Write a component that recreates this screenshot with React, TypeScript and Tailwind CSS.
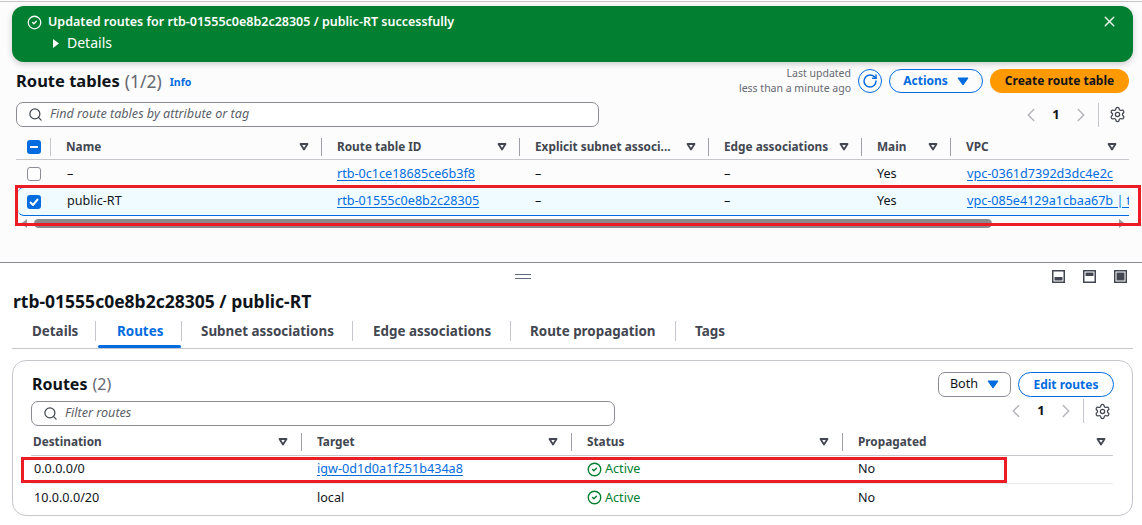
import { ChevronLeft, ChevronRight, CircleCheck, RotateCw, Search, Settings, X } from "lucide-react";

const Caret = ({ className = "" }: { className?: string }) => (
  <svg width="12" height="10" viewBox="0 0 12 10" className={className}>
    <path d="M2.5 2h7L6 7.5z" fill="none" stroke="#424650" strokeWidth="1.8" strokeLinejoin="round" />
  </svg>
);

const SolidCaret = ({ className = "" }: { className?: string }) => (
  <svg width="12" height="9" viewBox="0 0 12 9" className={className}>
    <path d="M1 1h10L6 8z" fill="#006ce0" stroke="#006ce0" strokeLinejoin="round" />
  </svg>
);

const Pager = ({ className = "" }: { className?: string }) => (
  <div className={`flex items-center ${className}`}>
    <ChevronLeft size={22} strokeWidth={1.6} className="text-[#b4b4bb]" />
    <span className="w-[28px] text-center text-[13px] font-bold text-[#0f141a]">1</span>
    <ChevronRight size={22} strokeWidth={1.6} className="text-[#b4b4bb]" />
    <span className="ml-[6px] h-[24px] w-px bg-[#c6c6cd]" />
    <Settings size={17} strokeWidth={1.8} className="ml-[10px] text-[#424650]" />
  </div>
);

const SearchBox = ({ text, className = "" }: { text: string; className?: string }) => (
  <div className={`flex h-[25px] items-center rounded-[7px] border border-[#8c8c94] bg-white pl-[11px] ${className}`}>
    <Search size={15} strokeWidth={2} className="text-[#424650]" />
    <span className="ml-[7px] text-[12.6px] italic text-[#5b6068]">{text}</span>
  </div>
);

const HeadCell = ({ label, sep = true, width }: { label: string; sep?: boolean; width: string }) => (
  <div className={`flex h-[18px] items-center justify-between pl-[15px] pr-[11px] text-[11.8px] font-bold text-[#424650] ${width} ${sep ? "border-r border-[#a0a0a8]" : ""}`}>
    <span className="truncate">{label}</span>
    <Caret />
  </div>
);

const Link = ({ children }: { children: React.ReactNode }) => (
  <span className="text-[12.6px] text-[#006ce0] underline underline-offset-2">{children}</span>
);

const topCols = ["w-[35px]", "w-[271px]", "w-[198px]", "w-[189px]", "w-[153px]", "w-[89px]", "w-[178px]"];

const TopRow = ({ checked, name, id, vpc }: { checked?: boolean; name: string; id: string; vpc: string }) => (
  <div className={`flex items-center text-[12.6px] text-[#0f141a] ${checked ? "ml-[2px] h-[29px] rounded-l-[6px] border-y border-[#006ce0] bg-[#f0fbff]" : "h-[27px] pt-[1px]"}`}>
    <div className={`${topCols[0]} flex ${checked ? "ml-[-2px] pl-[11px]" : "pl-[11px]"}`}>
      {checked ? (
        <span className="flex h-[14px] w-[14px] items-center justify-center rounded-[3px] bg-[#006ce0]">
          <svg width="10" height="8" viewBox="0 0 10 8"><path d="M1 4l3 3 5-6" fill="none" stroke="white" strokeWidth="2" /></svg>
        </span>
      ) : (
        <span className="h-[14px] w-[14px] rounded-[3px] border border-[#8c8c94] bg-white" />
      )}
    </div>
    <div className={`${topCols[1]} pl-[16px]`}>{name}</div>
    <div className={`${topCols[2]} pl-[15px]`}><Link>{id}</Link></div>
    <div className={`${topCols[3]} pl-[15px]`}>–</div>
    <div className={`${topCols[4]} pl-[15px]`}>–</div>
    <div className={`${topCols[5]} pl-[15px]`}>Yes</div>
    <div className={`${topCols[6]} overflow-hidden whitespace-nowrap pl-[16px]`}><Link>{vpc}</Link></div>
  </div>
);

const Active = () => (
  <span className="flex items-center gap-[3px] text-[12.6px] text-[#00802f]">
    <CircleCheck size={15} strokeWidth={2.2} />
    Active
  </span>
);

const RouteRow = ({ dest, target, border }: { dest: string; target: React.ReactNode; border?: boolean }) => (
  <div className={`flex h-[28px] items-center text-[12.6px] text-[#0f141a] ${border ? "border-b border-[#e8e8ec]" : ""}`}>
    <div className="w-[286px] pl-[3px]">{dest}</div>
    <div className="w-[270px]">{target}</div>
    <div className="w-[271px]"><Active /></div>
    <div>No</div>
  </div>
);

const tabs = [
  ["Details", "w-[84px] pl-[20px]"],
  ["Routes", "w-[86px] pl-[21px] text-[#006ce0]"],
  ["Subnet associations", "w-[171px] pl-[19px]"],
  ["Edge associations", "w-[158px] pl-[20px]"],
  ["Route propagation", "w-[165px] pl-[19px]"],
  ["Tags", "pl-[19px]"],
];

const WindowIcon = ({ y, h }: { y: number; h: number }) => (
  <svg width="13" height="13" viewBox="0 0 13 13">
    <rect x="0.75" y="0.75" width="11.5" height="11.5" fill="none" stroke="#424650" strokeWidth="1.5" />
    <rect x="2.5" y={y} width="8" height={h} fill="#424650" />
  </svg>
);

export default function App() {
  return (
    <div className="relative h-[525px] w-[1142px] overflow-hidden bg-white font-['Noto_Sans',sans-serif]">
      {/* Top panel */}
      <div className="h-[263px] border-b border-[#8c8c94] bg-[#fcfcfc] pt-[1px]">
        <div className="h-px bg-[#c6c6c6]" />

        {/* Flash */}
        <div className="ml-[12px] mt-[4px] flex h-[56px] w-[1121px] justify-between rounded-[12px] bg-[#037f31] pl-[15px] pr-[15px] pt-[7px] text-white shadow-[0_2px_6px_rgba(0,0,0,0.2)]">
          <div>
            <div className="flex items-center gap-[6px] text-[12.5px] font-semibold leading-[18px]">
              <CircleCheck size={15} strokeWidth={2} />
              <span>Updated routes for rtb-01555c0e8b2c28305 / public-RT successfully</span>
            </div>
            <div className="ml-[25px] mt-[3px] flex items-center gap-[7px] text-[14px] leading-[18px]">
              <svg width="8" height="9" viewBox="0 0 8 9"><path d="M1 0l6 4.5L1 9z" fill="white" /></svg>
              Details
            </div>
          </div>
          <X size={17} strokeWidth={2} className="text-[#e8f3ec]" />
        </div>

        {/* Header */}
        <div className="mt-[6px] flex h-[26px] items-center pl-[16px] pr-[13px]">
          <span className="text-[16.5px] font-bold text-[#0f141a]">Route tables</span>
          <span className="ml-[5px] text-[17.5px] text-[#656871]">(1/2)</span>
          <span className="ml-[8px] mt-[3px] text-[10.5px] font-bold text-[#006ce0]">Info</span>
          <div className="ml-auto text-right text-[10.5px] leading-[15px] text-[#656871]">
            <div>Last updated</div>
            <div>less than a minute ago</div>
          </div>
          <span className="ml-[7px] flex h-[24px] w-[24px] items-center justify-center rounded-full border-[1.5px] border-[#006ce0]">
            <RotateCw size={16} strokeWidth={2.2} className="text-[#006ce0]" />
          </span>
          <span className="ml-[7px] flex h-[24px] w-[94px] items-center justify-center gap-[9px] rounded-full border border-[#006ce0] text-[12px] font-bold text-[#006ce0]">
            Actions
            <SolidCaret />
          </span>
          <span className="ml-[7px] flex h-[24px] w-[139px] items-center justify-center rounded-full bg-[#ff9900] text-[12px] font-bold text-[#0f141a]">
            Create route table
          </span>
        </div>

        {/* Search + pager */}
        <div className="mt-[8px] flex items-center justify-between pl-[16px] pr-[16px]">
          <SearchBox text="Find route tables by attribute or tag" className="w-[583px]" />
          <Pager />
        </div>

        {/* Table */}
        <div className="ml-[16px] mt-[6px] w-[1113px]">
          <div className="flex h-[27px] items-center border-b border-[#c6c6cd] pt-[2px]">
            <div className={`${topCols[0]} flex h-[18px] items-center border-r border-[#c6c6cd] pl-[11px]`}>
              <span className="flex h-[14px] w-[14px] items-center justify-center rounded-[3px] bg-[#006ce0]">
                <span className="h-[2px] w-[8px] bg-white" />
              </span>
            </div>
            <HeadCell label="Name" width={topCols[1]} />
            <HeadCell label="Route table ID" width={topCols[2]} />
            <HeadCell label="Explicit subnet associ..." width={topCols[3]} />
            <HeadCell label="Edge associations" width={topCols[4]} />
            <HeadCell label="Main" width={topCols[5]} />
            <HeadCell label="VPC" width={topCols[6]} sep={false} />
          </div>
          <TopRow name="–" id="rtb-0c1ce18685ce6b3f8" vpc="vpc-0361d7392d3dc4e2c" />
          <TopRow checked name="public-RT" id="rtb-01555c0e8b2c28305" vpc="vpc-085e4129a1cbaa67b | three-tier-vpc" />
        </div>

        {/* Scrollbar */}
        <div className="ml-[20px] mt-[3px] flex h-[9px] w-[1106px] items-center">
          <svg width="8" height="9" viewBox="0 0 8 9"><path d="M7 0v9L1 4.5z" fill="#9a9a9a" /></svg>
          <span className="ml-[6px] h-[9px] w-[958px] rounded-full bg-[#8a8a8a]" />
          <svg width="8" height="9" viewBox="0 0 8 9" className="ml-auto"><path d="M1 0v9l6-4.5z" fill="#9a9a9a" /></svg>
        </div>
      </div>

      {/* Split panel */}
      <div className="relative flex h-[27px] items-start justify-center">
        <span className="mt-[11px] ml-[-96px] h-[5px] w-[16px] border-y border-[#5f6b7a]" />
        <div className="absolute right-[15px] top-[7px] flex gap-[18px]">
          <WindowIcon y={7} h={3.5} />
          <WindowIcon y={2.5} h={3.5} />
          <WindowIcon y={2.5} h={8} />
        </div>
      </div>

      <div className="pl-[13px] text-[17.5px] font-bold leading-[22px] text-[#0f141a]">rtb-01555c0e8b2c28305 / public-RT</div>

      {/* Tabs */}
      <div className="relative ml-[12px] flex h-[37px] w-[1121px] border-b border-[#c6c6cd] pt-[9px] text-[13.4px] font-bold text-[#424650]">
        {tabs.map(([label, cls], i) => (
          <div key={label} className={`h-[20px] leading-[20px] ${cls} ${i < tabs.length - 1 ? "border-r border-[#c6c6cd]" : ""}`}>
            {label}
          </div>
        ))}
        <span className="absolute left-[86px] top-[33px] h-[3px] w-[83px] rounded-full bg-[#006ce0]" />
      </div>

      {/* Routes card */}
      <div className="ml-[12px] mt-[11px] h-[156px] w-[1121px] rounded-[14px] border border-[#c6c6cd] px-[18px] pt-[11px]">
        <div className="flex h-[25px] items-center">
          <span className="ml-[1px] mt-[-1px] text-[16px] font-bold text-[#0f141a]">Routes</span>
          <span className="ml-[5px] mt-[-1px] text-[16px] text-[#656871]">(2)</span>
          <span className="ml-auto mr-[7px] flex h-[25px] w-[73px] items-center justify-center gap-[9px] rounded-[7px] border border-[#8c8c94] text-[12.6px] text-[#0f141a]">
            Both
            <SolidCaret />
          </span>
          <span className="flex h-[25px] w-[96px] items-center justify-center rounded-full border border-[#006ce0] text-[12px] font-bold text-[#006ce0]">
            Edit routes
          </span>
        </div>
        <div className="flex items-start justify-between">
          <SearchBox text="Filter routes" className="mt-[4px] w-[584px]" />
          <Pager className="mr-[3px] mt-[2px]" />
        </div>
        <div className="mt-[2px] w-[1082px]">
          <div className="flex h-[28px] items-center border-b border-[#c6c6cd] text-[11.8px] font-bold text-[#424650]">
            <div className="flex h-[18px] w-[271px] items-center justify-between border-r border-[#a0a0a8] pl-[2px] pr-[12px]">Destination<Caret /></div>
            <div className="flex h-[18px] w-[270px] items-center justify-between border-r border-[#a0a0a8] pl-[15px] pr-[12px]">Target<Caret /></div>
            <div className="flex h-[18px] w-[271px] items-center justify-between border-r border-[#a0a0a8] pl-[15px] pr-[12px]">Status<Caret /></div>
            <div className="flex h-[18px] flex-1 items-center justify-between pl-[15px] pr-[6px]">Propagated<Caret /></div>
          </div>
          <RouteRow border dest="0.0.0.0/0" target={<Link>igw-0d1d0a1f251b434a8</Link>} />
          <RouteRow dest="10.0.0.0/20" target="local" />
        </div>
      </div>

      {/* Red annotation boxes */}
      <div className="absolute left-[15px] top-[185px] h-[41px] w-[1126px] border-[3px] border-[#ed1c24]" />
      <div className="absolute left-[21px] top-[457px] h-[26px] w-[986px] border-[3px] border-[#ed1c24]" />
    </div>
  );
}
